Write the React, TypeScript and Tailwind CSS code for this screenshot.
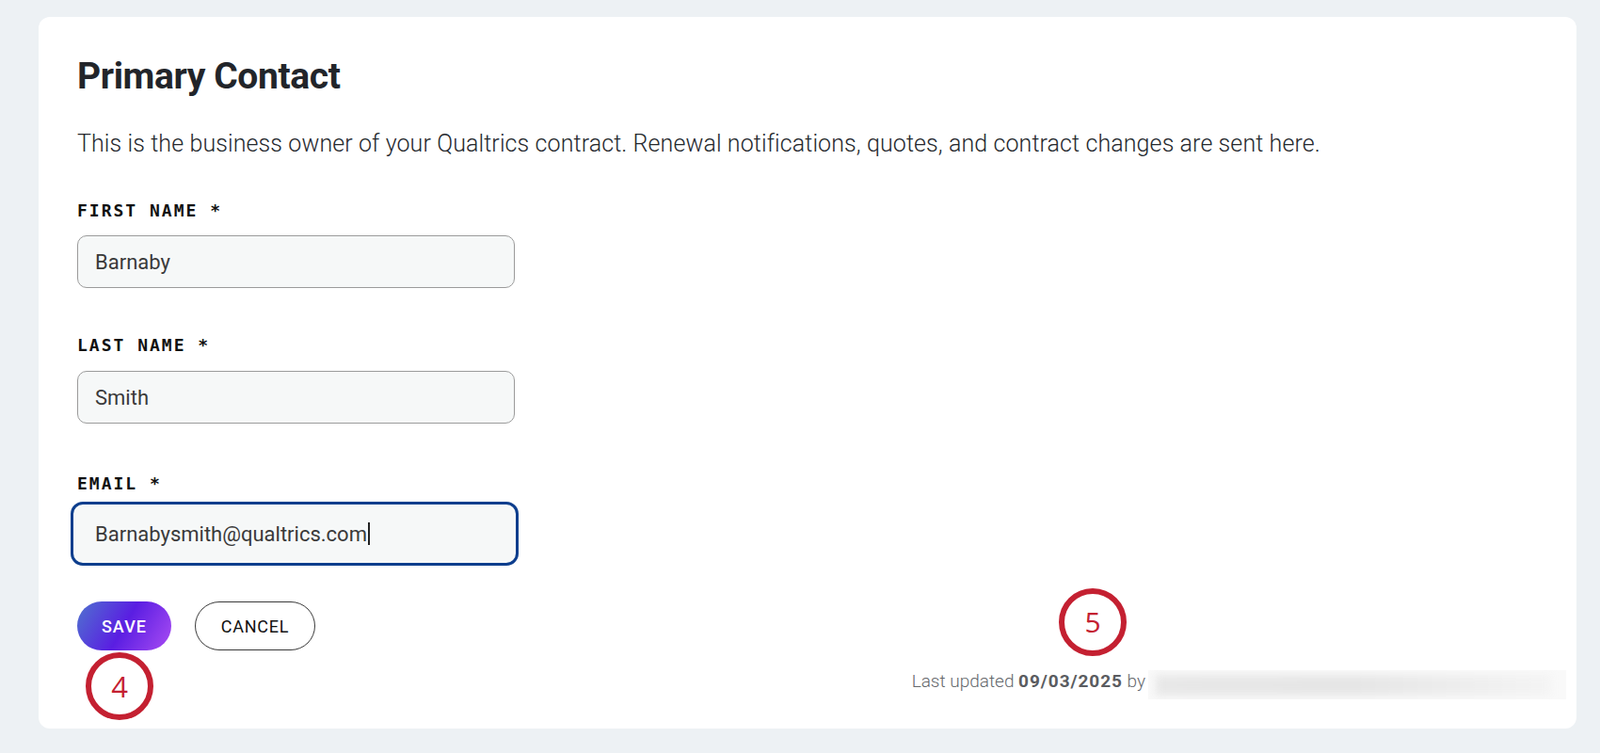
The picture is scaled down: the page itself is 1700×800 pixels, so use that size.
export default function App() {
  return (
    <div className="min-h-screen bg-[#edf1f4] pl-[41px] pr-[25px] pt-[18px]">
      <div className="relative h-[756px] rounded-[12px] bg-white pl-[41px] pr-[11px] pt-[40px] pb-[31px] font-['Roboto',sans-serif]">
        <h1 className="text-[39px] font-bold leading-[46px] tracking-[-0.01em] text-[#22252a]">
          Primary Contact
        </h1>
        <p className="mt-[33px] text-[25px] font-light leading-[32px] tracking-[0.1px] text-[#26292e]">
          This is the business owner of your Qualtrics contract. Renewal notifications, quotes, and contract changes are sent here.
        </p>

        {/* First name */}
        <label className="mt-[43px] block font-['DejaVu_Sans_Mono',monospace] text-[18px] font-bold leading-[24px] tracking-[2px] text-[#111]">
          FIRST NAME *
        </label>
        <input
          readOnly
          value="Barnaby"
          className="mt-[14px] block h-[56px] w-[465px] rounded-[10px] border border-[#9b9b9b] bg-[#f6f8f8] pl-[18px] text-[22px] text-[#3a3a3a] outline-none"
        />

        {/* Last name */}
        <label className="mt-[49px] block font-['DejaVu_Sans_Mono',monospace] text-[18px] font-bold leading-[24px] tracking-[2px] text-[#111]">
          LAST NAME *
        </label>
        <input
          readOnly
          value="Smith"
          className="mt-[15px] block h-[56px] w-[465px] rounded-[10px] border border-[#9b9b9b] bg-[#f6f8f8] pl-[18px] text-[22px] text-[#3a3a3a] outline-none"
        />

        {/* Email (focused) */}
        <label className="mt-[52px] block font-['DejaVu_Sans_Mono',monospace] text-[18px] font-bold leading-[24px] tracking-[2px] text-[#111]">
          EMAIL *
        </label>
        <div
          role="textbox"
          className="-ml-[7px] mt-[7px] flex h-[68px] w-[476px] items-center rounded-[13px] border-[3px] border-[#0d3e8d] bg-[#f6f8f8] pl-[23px] text-[22px] text-[#3a3a3a]"
        >
          <span>Barnabysmith@qualtrics.com</span>
          <span className="ml-[1px] inline-block h-[24px] w-[2px] bg-[#222]" />
        </div>

        {/* Actions + meta */}
        <div className="mt-[38px] flex justify-between">
          <div className="flex gap-[25px] self-start">
            <button className="h-[52px] w-[100px] rounded-full bg-[linear-gradient(120deg,#4f73cf_0%,#5a1ee2_50%,#a94cf3_100%)] text-[18px] font-medium tracking-[0.06em] text-white">
              SAVE
            </button>
            <button className="h-[52px] w-[128px] rounded-full border-[1.5px] border-[#3a3a3a] bg-white text-[18px] tracking-[0.04em] text-[#111]">
              CANCEL
            </button>
          </div>
          <div className="mt-[73px] flex items-start">
            <span className="text-[19px] font-light leading-[24px] text-[#66696d]">
              Last updated{" "}
              <span className="font-bold tracking-[0.05em] text-[#5a5c60]">09/03/2025</span> by
            </span>
            <div className="ml-[3px] h-[31px] w-[444px] overflow-hidden bg-[#f9f9f9]">
              <div className="ml-[8px] mt-[5px] h-[22px] w-[420px] bg-linear-to-r from-[#e8e8e8] via-[#e6e6e6] to-[#f4f4f4] blur-[4px]" />
            </div>
          </div>
        </div>

        {/* Annotation markers */}
        <div className="absolute left-[50px] top-[675px] flex h-[72px] w-[72px] items-center justify-center rounded-full border-[6px] border-[#c42031] font-['Open_Sans',sans-serif] text-[31px] leading-none text-[#c42031]">
          4
        </div>
        <div className="absolute left-[1084px] top-[607px] flex h-[72px] w-[72px] items-center justify-center rounded-full border-[6px] border-[#c42031] font-['Open_Sans',sans-serif] text-[30px] leading-none text-[#c42031]">
          5
        </div>
      </div>
    </div>
  );
}
